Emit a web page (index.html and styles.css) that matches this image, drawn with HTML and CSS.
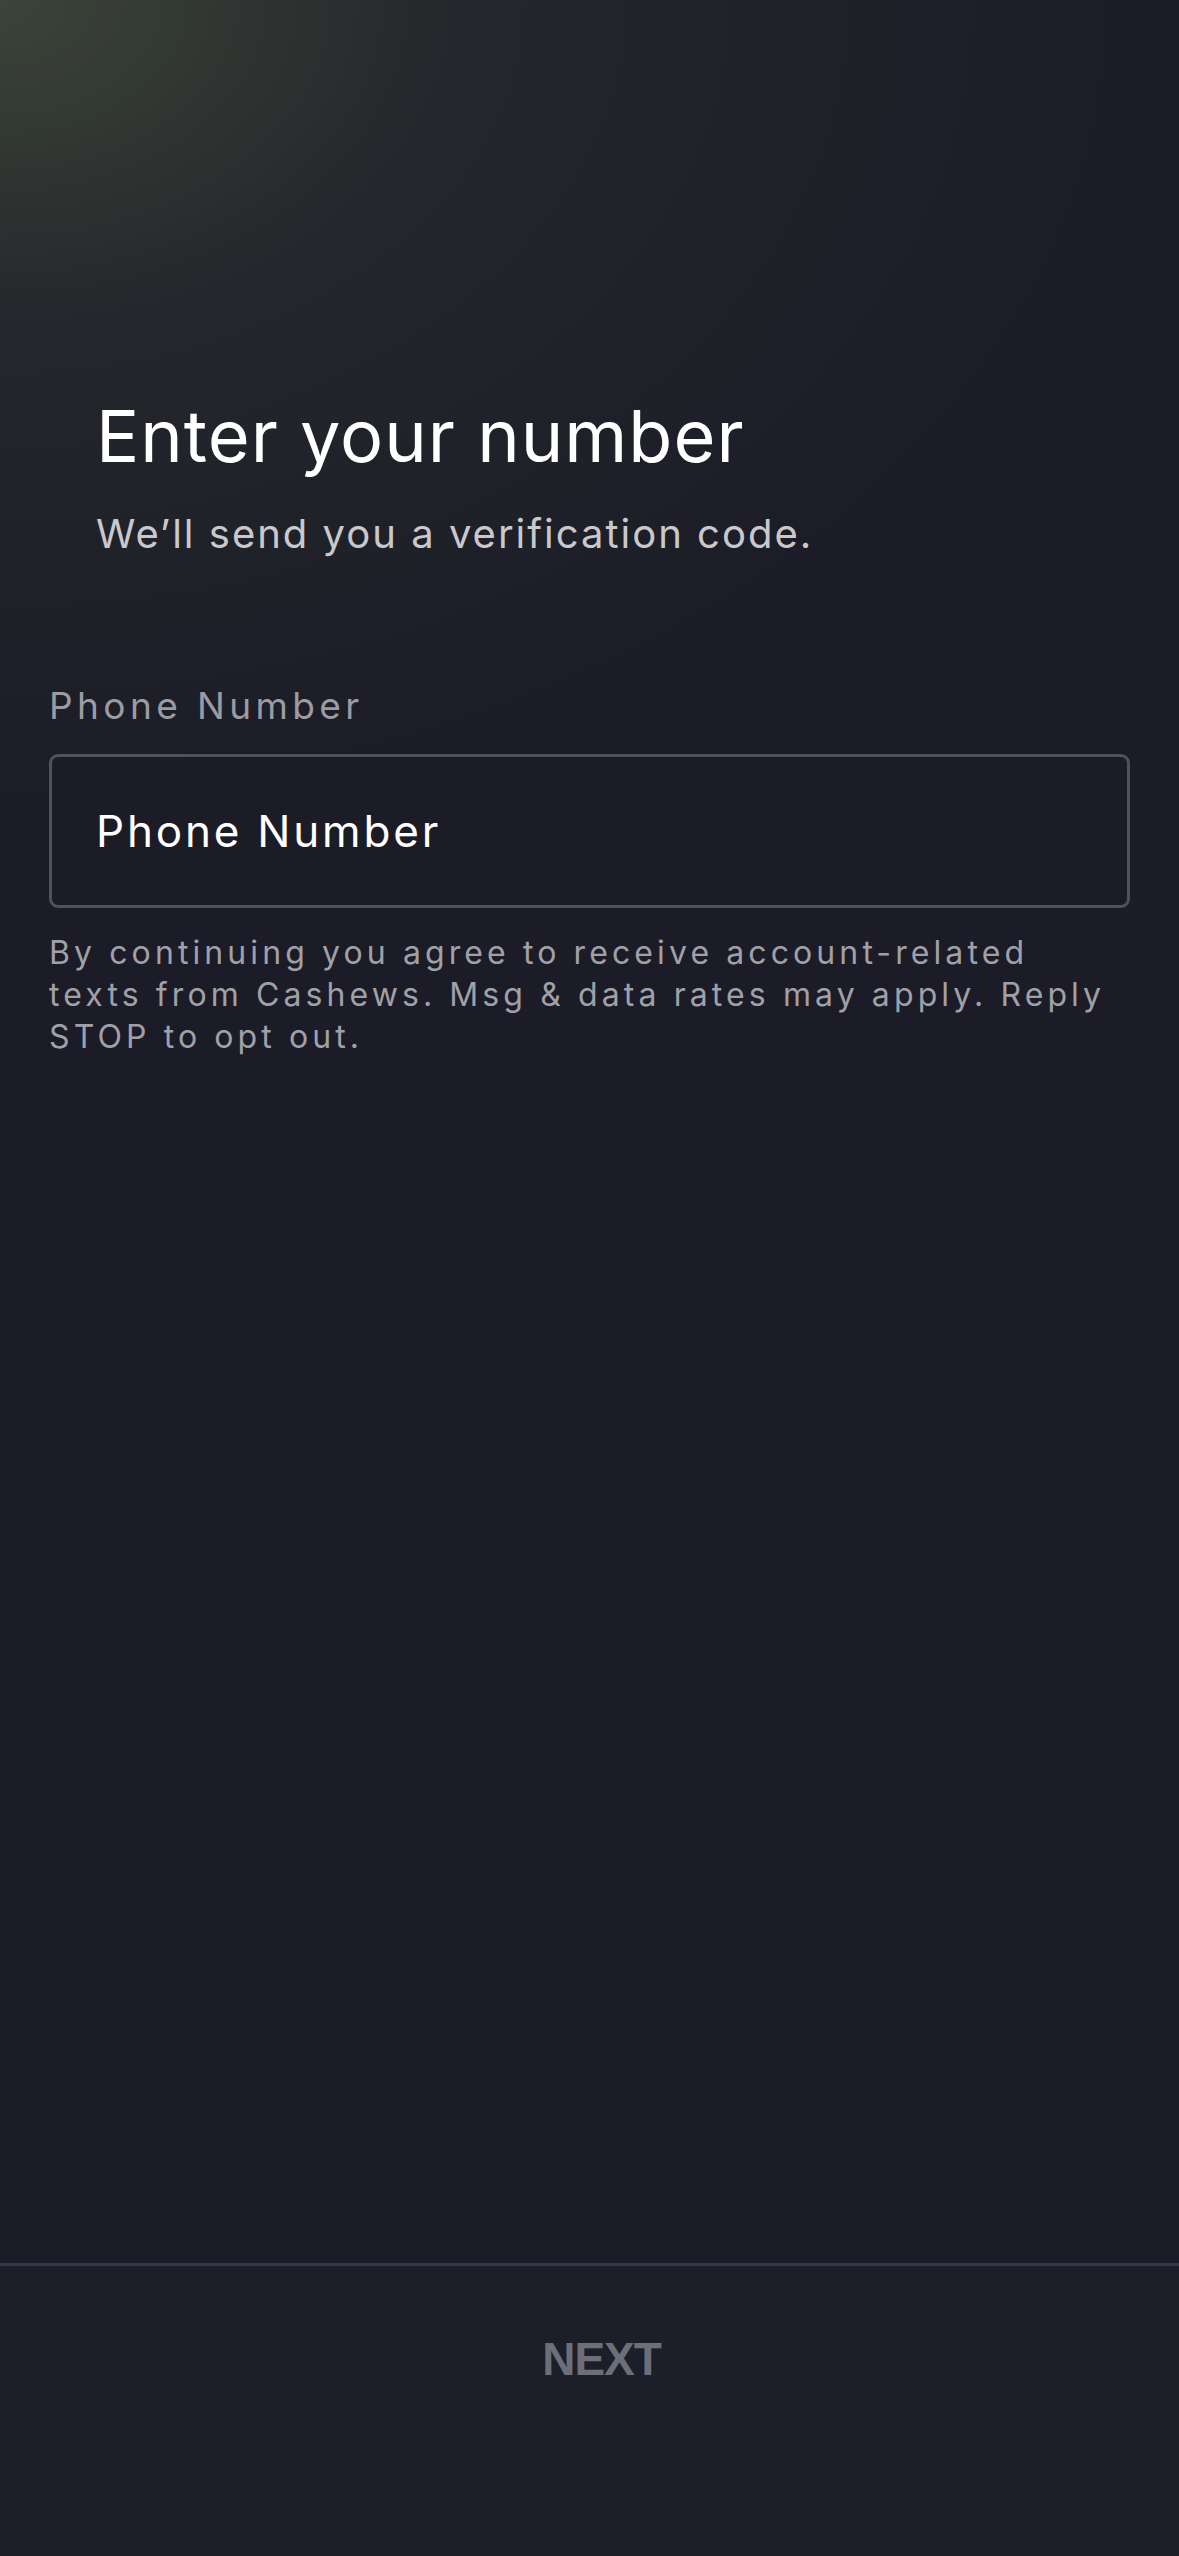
FILE: index.html
```html
<!DOCTYPE html>
<html lang="en">
<head>
<meta charset="utf-8">
<title>Enter your number</title>
<link rel="stylesheet" href="styles.css">
</head>
<body>
<div class="screen">
  <main class="content">
    <header class="intro">
      <h1 class="title">Enter your number</h1>
      <p class="subtitle">We’ll send you a verification code.</p>
    </header>
    <section class="field">
      <label class="field-label" for="phone">Phone Number</label>
      <div class="input-box">
        <input id="phone" class="input" type="tel" placeholder="Phone Number">
      </div>
      <p class="disclaimer">By continuing you agree to receive account-related texts from Cashews. Msg &amp; data rates may apply. Reply STOP to opt out.</p>
    </section>
  </main>
  <footer class="footer">
    <button class="next" type="button">NEXT</button>
  </footer>
</div>
</body>
</html>
```
FILE: styles.css
```css
* { box-sizing: border-box; }
html, body { margin: 0; padding: 0; }
body {
  background: #1b1c27;
  font-family: Inter, "Noto Sans", sans-serif;
  color: #ffffff;
}
.screen {
  min-height: 2556px;
  display: flex;
  flex-direction: column;
  background:
    radial-gradient(ellipse 1150px 820px at 0 0, rgba(62, 70, 58, 0.95) 0%, rgba(42, 46, 46, 0.6) 40%, rgba(27, 28, 39, 0) 100%),
    #1b1c27;
}
.content {
  flex: 1;
  display: flex;
  flex-direction: column;
  padding: 393px 49px 0 49px;
}
.intro {
  padding-left: 47px;
}
.title {
  margin: 0;
  font-size: 72px;
  line-height: 86px;
  font-weight: 400;
  color: #ffffff;
  letter-spacing: 1px;
}
.subtitle {
  margin: 31px 0 0 0;
  font-size: 40px;
  line-height: 48px;
  color: #c9c9cd;
  letter-spacing: 2px;
}
.field {
  margin-top: 126px;
  display: flex;
  flex-direction: column;
}
.field-label {
  font-size: 37px;
  line-height: 44px;
  color: #9b9ca2;
  letter-spacing: 4.4px;
}
.input-box {
  margin-top: 26px;
  height: 154px;
  border: 3px solid #50525b;
  border-radius: 9px;
  display: flex;
  align-items: center;
  padding: 0 44px;
  background: #1b1c26;
}
.input {
  width: 100%;
  border: 0;
  outline: 0;
  background: transparent;
  font-family: inherit;
  font-size: 44px;
  color: #ffffff;
  padding: 0;
  letter-spacing: 2.8px;
}
.input::placeholder { color: #ffffff; opacity: 1; }
.disclaimer {
  margin: 24px 0 0 0;
  font-size: 32px;
  line-height: 42px;
  color: #a0a1a7;
  letter-spacing: 4.1px;
}
.footer {
  border-top: 3px solid #363845;
  background: #1c1e2a;
  padding-bottom: 104px;
}
.next {
  display: block;
  width: 100%;
  height: 186px;
  border: 0;
  background: transparent;
  font-family: "Liberation Sans", Arial, sans-serif;
  font-weight: 700;
  font-size: 46px;
  color: #6c6f77;
  padding: 0 0 0 24px;
  letter-spacing: -1px;
}
```
